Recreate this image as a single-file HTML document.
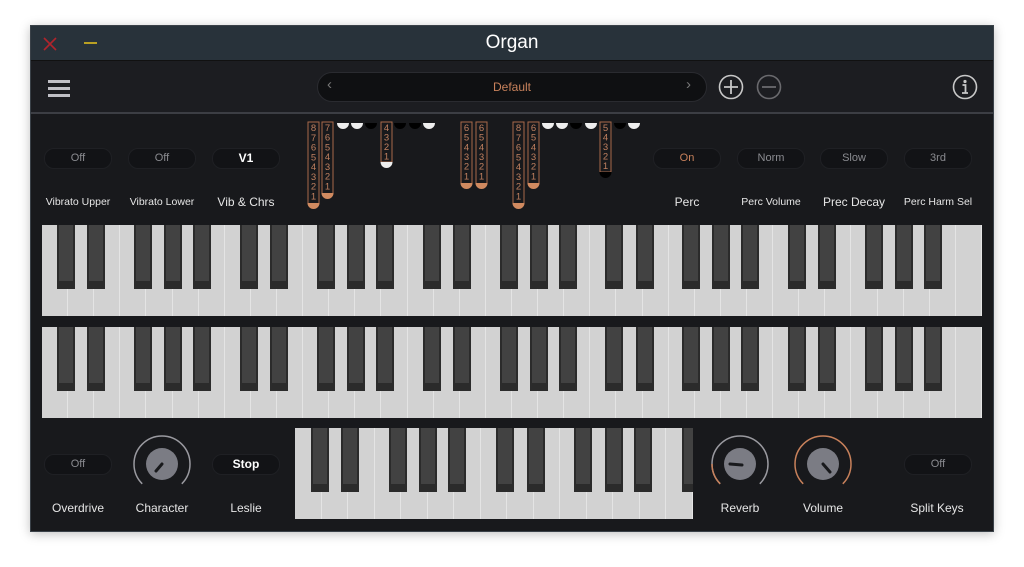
<!DOCTYPE html>
<html><head><meta charset="utf-8"><style>
*{margin:0;padding:0;box-sizing:border-box}
body{width:1024px;height:567px;background:#fff;position:relative;overflow:hidden;font-family:"Liberation Sans",sans-serif}
.win{position:absolute;left:30px;top:25px;width:964px;height:507px;background:#18191c;border:1px solid #3a4148;box-shadow:0 2px 10px rgba(0,0,0,.25)}
.tb{position:absolute;left:0;top:0;width:962px;height:35px;background:#28323a;border-bottom:1px solid #111}
.tb .t{position:absolute;left:0;right:0;top:6px;text-align:center;color:#fff;font-size:19px}
.hd{position:absolute;left:0;top:35px;width:962px;height:53px;background:#1c1d21;border-bottom:2px solid #3c3e44}
.a{position:absolute}
.pill{position:absolute;width:68px;height:21px;border-radius:10px;background:#121316;border:1px solid #1f2024;color:#8a8b90;font-size:11px;text-align:center;line-height:19px}
.lbl{position:absolute;color:#e6e6e6;font-size:11px;text-align:center;width:120px}
.kb{position:absolute;background:#d2d2d2;overflow:hidden}
.w{position:absolute;top:0;bottom:0;border-right:1px solid #e4e4e4}
.b{position:absolute;top:0;width:18px;background:#2b2b2b}
.b::after{content:"";position:absolute;left:2px;right:2px;top:0;bottom:8px;background:#424242}
</style></head><body>
<div class="win">
 <div class="tb"><div class="t">Organ</div>
  <svg class="a" style="left:12px;top:11px" width="14" height="14"><path d="M1 1L13 13M13 1L1 13" stroke="#b0242c" stroke-width="1.6"/></svg>
  <div class="a" style="left:53px;top:16px;width:13px;height:2px;background:#b9a023"></div>
 </div>
 <div class="hd">
  <div class="a" style="left:17px;top:19px;width:22px;height:3px;background:#c0c0c6;box-shadow:0 7px 0 #c0c0c6,0 14px 0 #c0c0c6"></div>
  <div class="a" style="left:286px;top:11px;width:390px;height:30px;border-radius:15px;background:#0f1012;border:1px solid #2a2b30"></div>
  <div class="a" style="left:296px;top:15px;color:#777;font-size:15px">‹</div>
  <div class="a" style="left:655px;top:15px;color:#777;font-size:15px">›</div>
  <div class="a" style="left:286px;top:19px;width:390px;text-align:center;color:#c8815b;font-size:12px">Default</div>
  <svg class="a" style="left:687px;top:13px" width="26" height="26"><circle cx="13" cy="13" r="11.5" fill="none" stroke="#c8c8c8" stroke-width="1.6"/><path d="M13 6v14M6 13h14" stroke="#c8c8c8" stroke-width="1.8"/></svg>
  <svg class="a" style="left:725px;top:13px" width="26" height="26"><circle cx="13" cy="13" r="11.5" fill="none" stroke="#6a6a6e" stroke-width="1.6"/><path d="M6 13h14" stroke="#6a6a6e" stroke-width="1.8"/></svg>
  <svg class="a" style="left:921px;top:13px" width="26" height="26"><circle cx="13" cy="13" r="11.5" fill="none" stroke="#c8c8c8" stroke-width="1.6"/><circle cx="13" cy="7.5" r="1.6" fill="#c8c8c8"/><path d="M10.5 11h3v8M10 19h6" stroke="#c8c8c8" stroke-width="1.8" fill="none"/></svg>
 </div>
</div>
<div class="pill" style="left:44px;top:148px">Off</div>
<div class="pill" style="left:128px;top:148px">Off</div>
<div class="pill" style="left:212px;top:148px;color:#fff;font-weight:bold;font-size:12px">V1</div>
<div class="pill" style="left:653px;top:148px;color:#c8815b">On</div>
<div class="pill" style="left:737px;top:148px">Norm</div>
<div class="pill" style="left:820px;top:148px">Slow</div>
<div class="pill" style="left:904px;top:148px">3rd</div>
<div class="lbl" style="left:18px;top:196px;font-size:10.5px">Vibrato Upper</div>
<div class="lbl" style="left:102px;top:196px;font-size:10.5px">Vibrato Lower</div>
<div class="lbl" style="left:186px;top:195px;font-size:12px">Vib &amp; Chrs</div>
<div class="lbl" style="left:627px;top:195px;font-size:12px">Perc</div>
<div class="lbl" style="left:711px;top:196px;font-size:10.5px">Perc Volume</div>
<div class="lbl" style="left:794px;top:195px;font-size:12px">Prec Decay</div>
<div class="lbl" style="left:878px;top:196px;font-size:10.5px">Perc Harm Sel</div>
<svg class="a" style="left:0;top:0" width="1024" height="230" id="db"></svg>
<div class="kb" id="k1" style="left:42px;top:225px;width:940px;height:91px"></div>
<div class="kb" id="k2" style="left:42px;top:327px;width:940px;height:91px"></div>
<div class="kb" id="k3" style="left:295px;top:428px;width:398px;height:91px"></div>
<div class="pill" style="left:44px;top:454px">Off</div>
<div class="pill" style="left:212px;top:454px;color:#fff;font-weight:bold;font-size:12px">Stop</div>
<div class="pill" style="left:904px;top:454px">Off</div>
<div class="lbl" style="left:18px;top:501px;font-size:12px">Overdrive</div>
<div class="lbl" style="left:102px;top:501px;font-size:12px">Character</div>
<div class="lbl" style="left:186px;top:501px;font-size:12px">Leslie</div>
<div class="lbl" style="left:680px;top:501px;font-size:12px">Reverb</div>
<div class="lbl" style="left:763px;top:501px;font-size:12px">Volume</div>
<div class="lbl" style="left:877px;top:501px;font-size:12px">Split Keys</div>
<svg class="a" style="left:0;top:0" width="1024" height="567">
 <g transform="translate(162,464)">
  <path d="M-19.8 19.8A28 28 0 1 1 19.8 19.8" fill="none" stroke="#9a9aa0" stroke-width="1.5"/>
  <circle r="16" fill="#7b7c84"/><path d="M0 0L-6 7" stroke="#18191c" stroke-width="3" stroke-linecap="round"/>
 </g>
 <g transform="translate(740,464)">
  <path d="M-19.8 19.8A28 28 0 1 1 19.8 19.8" fill="none" stroke="#9a9aa0" stroke-width="1.5"/>
  <path d="M-19.8 19.8A28 28 0 0 1 -28 0" fill="none" stroke="#c8815b" stroke-width="1.5"/>
  <circle r="16" fill="#7b7c84"/><path d="M2 1L-10 0" stroke="#18191c" stroke-width="3" stroke-linecap="round"/>
 </g>
 <g transform="translate(823,464)">
  <path d="M-19.8 19.8A28 28 0 1 1 19.8 19.8" fill="none" stroke="#c8815b" stroke-width="1.5"/>
  <circle r="16" fill="#7b7c84"/><path d="M0 0L7 8" stroke="#18191c" stroke-width="3" stroke-linecap="round"/>
 </g>
</svg>
<script>
function kb(id,n,w,nb){var e=document.getElementById(id),h='';
for(var i=0;i<n;i++)h+='<div class="w" style="left:'+(i*w)+'px;width:'+w+'px"></div>';
var off={0:-11,1:-7,3:-12.4,4:-8.5,5:-5.6};var bh=64;
for(var i=0;i<nb;i++){var m=i%7;if(m in off){var x=(i+1)*w+off[m];h+='<div class="b" style="left:'+x+'px;height:'+bh+'px"></div>';}}
e.innerHTML=h;}
kb('k1',36,940/36,35);kb('k2',36,940/36,35);kb('k3',15,26.5,15);
var s='';
function bar(x,n,bottom){var top=122;s+='<rect x="'+x+'" y="'+top+'" width="11" height="'+(bottom-top-4)+'" fill="none" stroke="#a8694a" stroke-width="1"/>';
var step=(bottom-top-8)/n;for(var k=0;k<n;k++)s+='<text x="'+(x+5.5)+'" y="'+(top+9+k*step)+'" fill="#c08060" font-size="9.5" text-anchor="middle" font-family="Liberation Sans">'+(n-k)+'</text>';
s+='<path d="M'+(x-0.5)+' '+(bottom-5)+'h12a6 6 0 0 1 -12 0z" fill="#d08a60"/>';}
function c(x,col,y){y=y||123;s+='<path d="M'+(x-6)+' '+y+'h12a6 6 0 0 1 -12 0z" fill="'+col+'"/>';}
bar(308,8,208);bar(322,7,198);c(343,'#eee');c(357,'#eee');c(371,'#000');
s+='<rect x="381" y="122" width="11" height="40" fill="none" stroke="#a8694a"/>';
for(var k=0;k<4;k++)s+='<text x="386.5" y="'+(131+k*9.5)+'" fill="#c08060" font-size="9.5" text-anchor="middle" font-family="Liberation Sans">'+(4-k)+'</text>';
c(386.5,'#eee',162);c(400,'#000');c(415,'#000');c(429,'#eee');
bar(461,6,188);bar(476,6,188);bar(513,8,208);bar(528,6,188);
c(548,'#eee');c(562,'#eee');c(576,'#000');c(591,'#eee');
s+='<rect x="600" y="122" width="11" height="50" fill="none" stroke="#a8694a"/>';
for(var k=0;k<5;k++)s+='<text x="605.5" y="'+(131+k*9.5)+'" fill="#c08060" font-size="9.5" text-anchor="middle" font-family="Liberation Sans">'+(5-k)+'</text>';
c(605.5,'#000',172);c(620,'#000');c(634,'#eee');
document.getElementById('db').innerHTML=s;
</script>
</body></html>
